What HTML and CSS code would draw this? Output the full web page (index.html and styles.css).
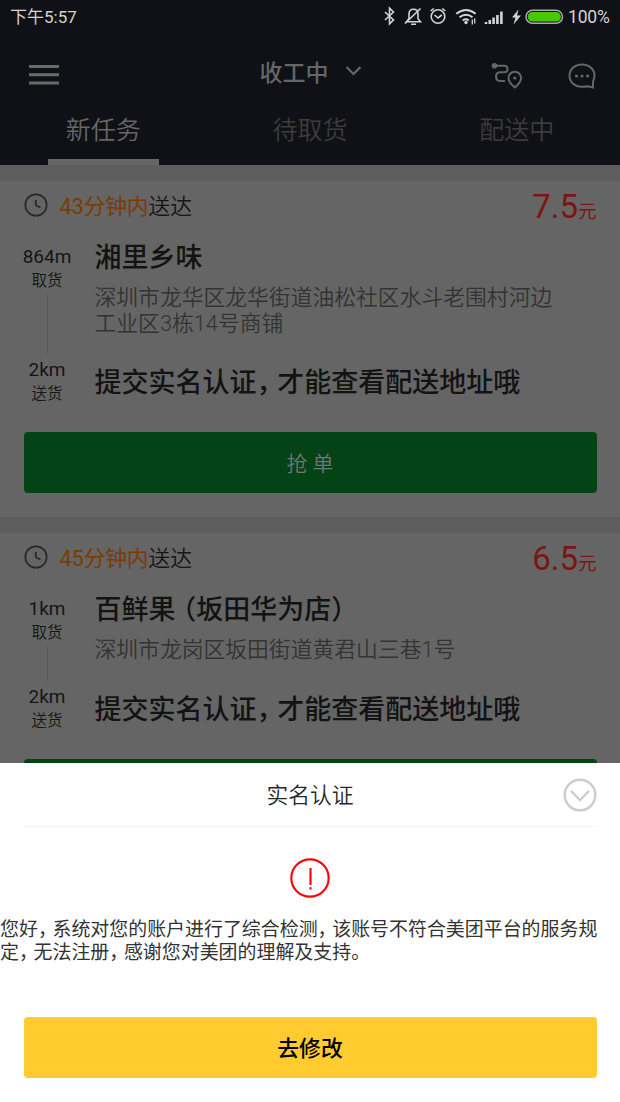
FILE: index.html
```html
<!DOCTYPE html>
<html lang="zh-CN">
<head>
<meta charset="utf-8">
<title>新任务</title>
<link rel="stylesheet" href="styles.css">
</head>
<body>
<div class="phone">
  <header class="top">
    <div class="status">
      <span class="clock">下午5:57</span>
      <svg class="status-icons" width="197" height="24" viewBox="0 0 197 24" fill="none" stroke="#d4d4d5" stroke-width="1.600">
        <path d="M1 8l8.500 8-4 3.800V4.200L9.500 8 1 16"/>
        <path d="M22.500 17.800h14l-2.500-3v-4.500q0-5-4.500-5t-4.500 5v4.500zM27 20.300h5M21 19.500L36.500 4.500"/>
        <circle cx="54" cy="12.500" r="6.800"/><path d="M50.500 11l3.500 3 3.800-3M46.700 7l3-2.500M61.300 7l-3-2.500"/>
        <g stroke-width="2"><path d="M72.300 9.800q9.700-7.500 19.400 0M75.500 13.300q6.500-5 13 0M78.700 16.500q3.300-2.400 6 0"/></g>
        <circle cx="82" cy="18.500" r="1.700" fill="#d4d4d5" stroke="none"/>
        <path d="M88.300 15.500v5M90.700 14.500v5" stroke-width="1.300"/>
        <g stroke-width="2.600"><path d="M102 20v-2M105.800 20v-4M109.600 20v-6.500M113.400 20v-9M117.400 20V7.500"/></g>
        <path d="M134.500 5.500l-6.500 8h3.500l-2 7 7.500-9h-4z" fill="#d4d4d5" stroke="none"/>
        <rect x="142" y="6.300" width="36.500" height="13" rx="6.500" stroke="#a9a9ab" stroke-width="1.500"/>
        <rect x="143.700" y="8" width="33.200" height="9.600" rx="4.800" fill="#48c800" stroke="none"/>
      </svg>
      <span class="percent">100%</span>
    </div>
    <div class="nav">
      <svg class="menu" width="30" height="21" viewBox="0 0 30 21" fill="#6a6a6a"><path d="M0 0h30v3H0zM0 8.200h30v3H0zM0 16.500h30v3H0z"/></svg>
      <div class="state"><span>收工中</span><svg width="17" height="12" viewBox="0 0 17 12" fill="none" stroke="#666" stroke-width="2.200"><path d="M1.500 2l7 7 7-7"/></svg></div>
      <div class="tools">
        <svg width="32" height="28" viewBox="0 0 32 28" fill="none" stroke="#666" stroke-width="2">
          <circle cx="3.500" cy="3.800" r="2.800" fill="#666" stroke="none"/>
          <path d="M4 3.800h9.500q3 0 3 3.200t-3 3.200H9.500Q5 10.200 5 14.600t4 4.400H14"/>
          <path d="M23.800 25.500q-6.300-5.200-6.300-9.500a6.300 6.300 0 0 1 12.600 0q0 4.300-6.300 9.500z"/>
          <circle cx="23.800" cy="16" r="1.600" fill="#666" stroke="none"/>
        </svg>
        <svg width="28" height="26" viewBox="0 0 28 26" fill="none" stroke="#666" stroke-width="2">
          <path d="M25 24.500q-2.500-.3-5-1.300-2.500.5-6 .5C6.500 23.700 1.500 18.700 1.500 12.700S6.500 1.500 14 1.500s12.500 5 12.500 11q0 3.200-1.500 6z"/>
          <g fill="#666" stroke="none"><circle cx="8.500" cy="13" r="1.600"/><circle cx="14" cy="13" r="1.600"/><circle cx="19.500" cy="13" r="1.600"/></g>
        </svg>
      </div>
    </div>
    <nav class="tabs">
      <div class="tab active">新任务</div>
      <div class="tab">待取货</div>
      <div class="tab">配送中</div>
    </nav>
  </header>

  <main class="list">
    <article class="card">
      <div class="head">
        <svg width="24" height="24" viewBox="0 0 24 24" fill="none" stroke="#292929" stroke-width="1.700"><circle cx="12" cy="12" r="10.700"/><path d="M11.800 7v5.300l4.700 2.200"/></svg>
        <span class="time"><b>43分钟内</b>送达</span>
        <span class="price">7.5<small>元</small></span>
      </div>
      <div class="body">
        <div class="route"><span class="dist">864m</span><span class="step">取货</span><i class="line"></i><span class="dist">2km</span><span class="step">送货</span></div>
        <div class="info">
          <h2>湘里乡味</h2>
          <p class="address">深圳市龙华区龙华街道油松社区水斗老围村河边<br>工业区3栋14号商铺</p>
          <h2>提交实名认证<span class="pc">，</span>才能查看配送地址哦</h2>
        </div>
      </div>
      <button class="btn grab">抢 单</button>
    </article>
    <article class="card">
      <div class="head">
        <svg width="24" height="24" viewBox="0 0 24 24" fill="none" stroke="#292929" stroke-width="1.700"><circle cx="12" cy="12" r="10.700"/><path d="M11.800 7v5.300l4.700 2.200"/></svg>
        <span class="time"><b>45分钟内</b>送达</span>
        <span class="price">6.5<small>元</small></span>
      </div>
      <div class="body">
        <div class="route"><span class="dist">1km</span><span class="step">取货</span><i class="line"></i><span class="dist">2km</span><span class="step">送货</span></div>
        <div class="info">
          <h2>百鲜果<span class="po">（</span>坂田华为店<span class="pc">）</span></h2>
          <p class="address">深圳市龙岗区坂田街道黄君山三巷1号</p>
          <h2>提交实名认证<span class="pc">，</span>才能查看配送地址哦</h2>
        </div>
      </div>
      <button class="btn grab"></button>
    </article>
  </main>

  <section class="sheet">
    <div class="sheet-head">
      <span class="sheet-title">实名认证</span>
      <svg width="34" height="34" viewBox="0 0 34 34" fill="none" stroke="#ccc" stroke-width="2.400"><circle cx="17" cy="17" r="15.300"/><path d="M8 13l9 9 9-9"/></svg>
    </div>
    <svg class="alert" width="40" height="40" viewBox="0 0 40 40" fill="none" stroke="#f50a0a" stroke-width="2.200"><circle cx="20" cy="20" r="18.700"/><path d="M20.500 10v17M20.500 29.200v2.200"/></svg>
    <p class="notice">您好<span class="pc">，</span>系统对您的账户进行了综合检测<span class="pc">，</span>该账号不符合美团平台的服务规<br>定<span class="pc">，</span>无法注册<span class="pc">，</span>感谢您对美团的理解及支持。</p>
    <button class="btn modify">去修改</button>
  </section>
</div>
</body>
</html>
```

FILE: styles.css
```css
* { box-sizing: border-box; }
body, h2, p { margin: 0; }
body { font-family: Roboto, "Noto Sans CJK SC", sans-serif; }
svg { display: block; flex: none; }

.phone {
  position: relative;
  width: 620px;
  height: 1102px;
  overflow: hidden;
  background: #656565;
}

/* Header */
.top { height: 165px; background: #101116; }
.status {
  display: flex;
  align-items: center;
  height: 33px;
  padding: 0 10px;
  color: #d4d4d5;
}
.clock { margin-top: -2px; font-size: 17px; }
.status-icons { margin: -1px 0 0 auto; }
.percent {
  width: 42px;
  margin: 0 0 0 -13px;
  font-size: 17.500px;
  letter-spacing: -0.200px;
  white-space: nowrap;
}
.nav {
  display: grid;
  grid-template-columns: 1fr auto 1fr;
  align-items: center;
  height: 81px;
  padding: 0 24px 0 29px;
}
.menu { margin-top: 4px; }
.state {
  display: flex;
  align-items: center;
  gap: 16px;
  margin: -6px 4px 0 0;
  color: #666;
  font-size: 23px;
  font-weight: 500;
}
.tools { display: flex; justify-content: flex-end; align-items: center; gap: 45px; margin-top: 5px; }
.tabs {
  display: grid;
  grid-template-columns: repeat(3, 1fr);
  height: 51px;
}
.tab {
  justify-self: center;
  width: 111px;
  color: #3c3c3d;
  font-size: 25px;
  font-weight: 350;
  line-height: 33px;
  text-align: center;
}
.tab.active { color: #666; border-bottom: 6px solid #656565; }

/* Task cards */
.list {
  display: grid;
  gap: 16px;
  padding-top: 16px;
  background: #5e5e5e;
}
.card { padding: 0 23.500px 24px; background: #656565; }
.head { display: flex; align-items: center; height: 48px; }
.time { margin: 3px 0 0 12px; color: #151515; font-size: 21.800px; font-weight: 350; line-height: 30px; }
.time b { color: #7c3c00; font-weight: 400; letter-spacing: -0.200px; }
.price { margin: 8px 0 0 auto; color: #7c1612; font-size: 33px; line-height: 36px; }
.price small { font-size: 18.500px; }
.body {
  display: grid;
  grid-template-columns: 48px 1fr;
  gap: 24px;
  margin-top: 11px;
}
.route { display: flex; flex-direction: column; align-items: center; padding-top: 5px; margin-left: -1px; color: #151515; }
.dist { font-size: 19px; line-height: 24px; }
.step { font-size: 15.500px; font-weight: 350; line-height: 24px; }
.line { flex: 1; width: 1px; margin: 1px 0 4px; background: #575757; }
.info { padding-bottom: 5px; margin-left: -1px; }
h2 {
  color: #131313;
  font-size: 27px;
  font-weight: 500;
  line-height: 36px;
  white-space: nowrap;
}
.address {
  margin: 9px 0 29px;
  color: #333;
  font-size: 21.800px;
  font-weight: 350;
  line-height: 25.500px;
  white-space: nowrap;
}
/* Half-width punctuation with a little air on its open side */
.pc, .po { font-feature-settings: "halt" 1; }
.pc { padding-right: 0.270em; }
.po { padding-left: 0.270em; }
.btn {
  display: block;
  width: 100%;
  height: 61px;
  padding: 3px 0 0;
  border: 0;
  border-radius: 4px;
  font: 400 21px/58px Roboto, "Noto Sans CJK SC", sans-serif;
}
.grab { margin-top: 26px; background: #034316; color: #747474; font-weight: 350; }

/* Bottom sheet covering the list */
.sheet {
  position: absolute;
  left: 0;
  right: 0;
  bottom: 0;
  height: 339px;
  background: #fff;
}
.sheet-head {
  display: grid;
  grid-template-columns: 1fr auto 1fr;
  align-items: center;
  height: 64px;
  margin: 0 23px 0 24px;
  border-bottom: 1px solid #f4f4f4;
}
.sheet-head svg { grid-column: 3; justify-self: end; }
.sheet-title { grid-column: 2; margin: 2px 1px 0 0; color: #282828; font-size: 21.800px; font-weight: 350; line-height: 30px; }
.alert { margin: 31px auto 0; }
.notice {
  margin-top: 21px;
  color: #333;
  font-size: 18.950px;
  line-height: 22.500px;
  white-space: nowrap;
}
.modify { width: 573px; margin: 53px 0 0 23.500px; background: #ffcb2e; color: #000; font-weight: 500; font-size: 21.800px; }
```
